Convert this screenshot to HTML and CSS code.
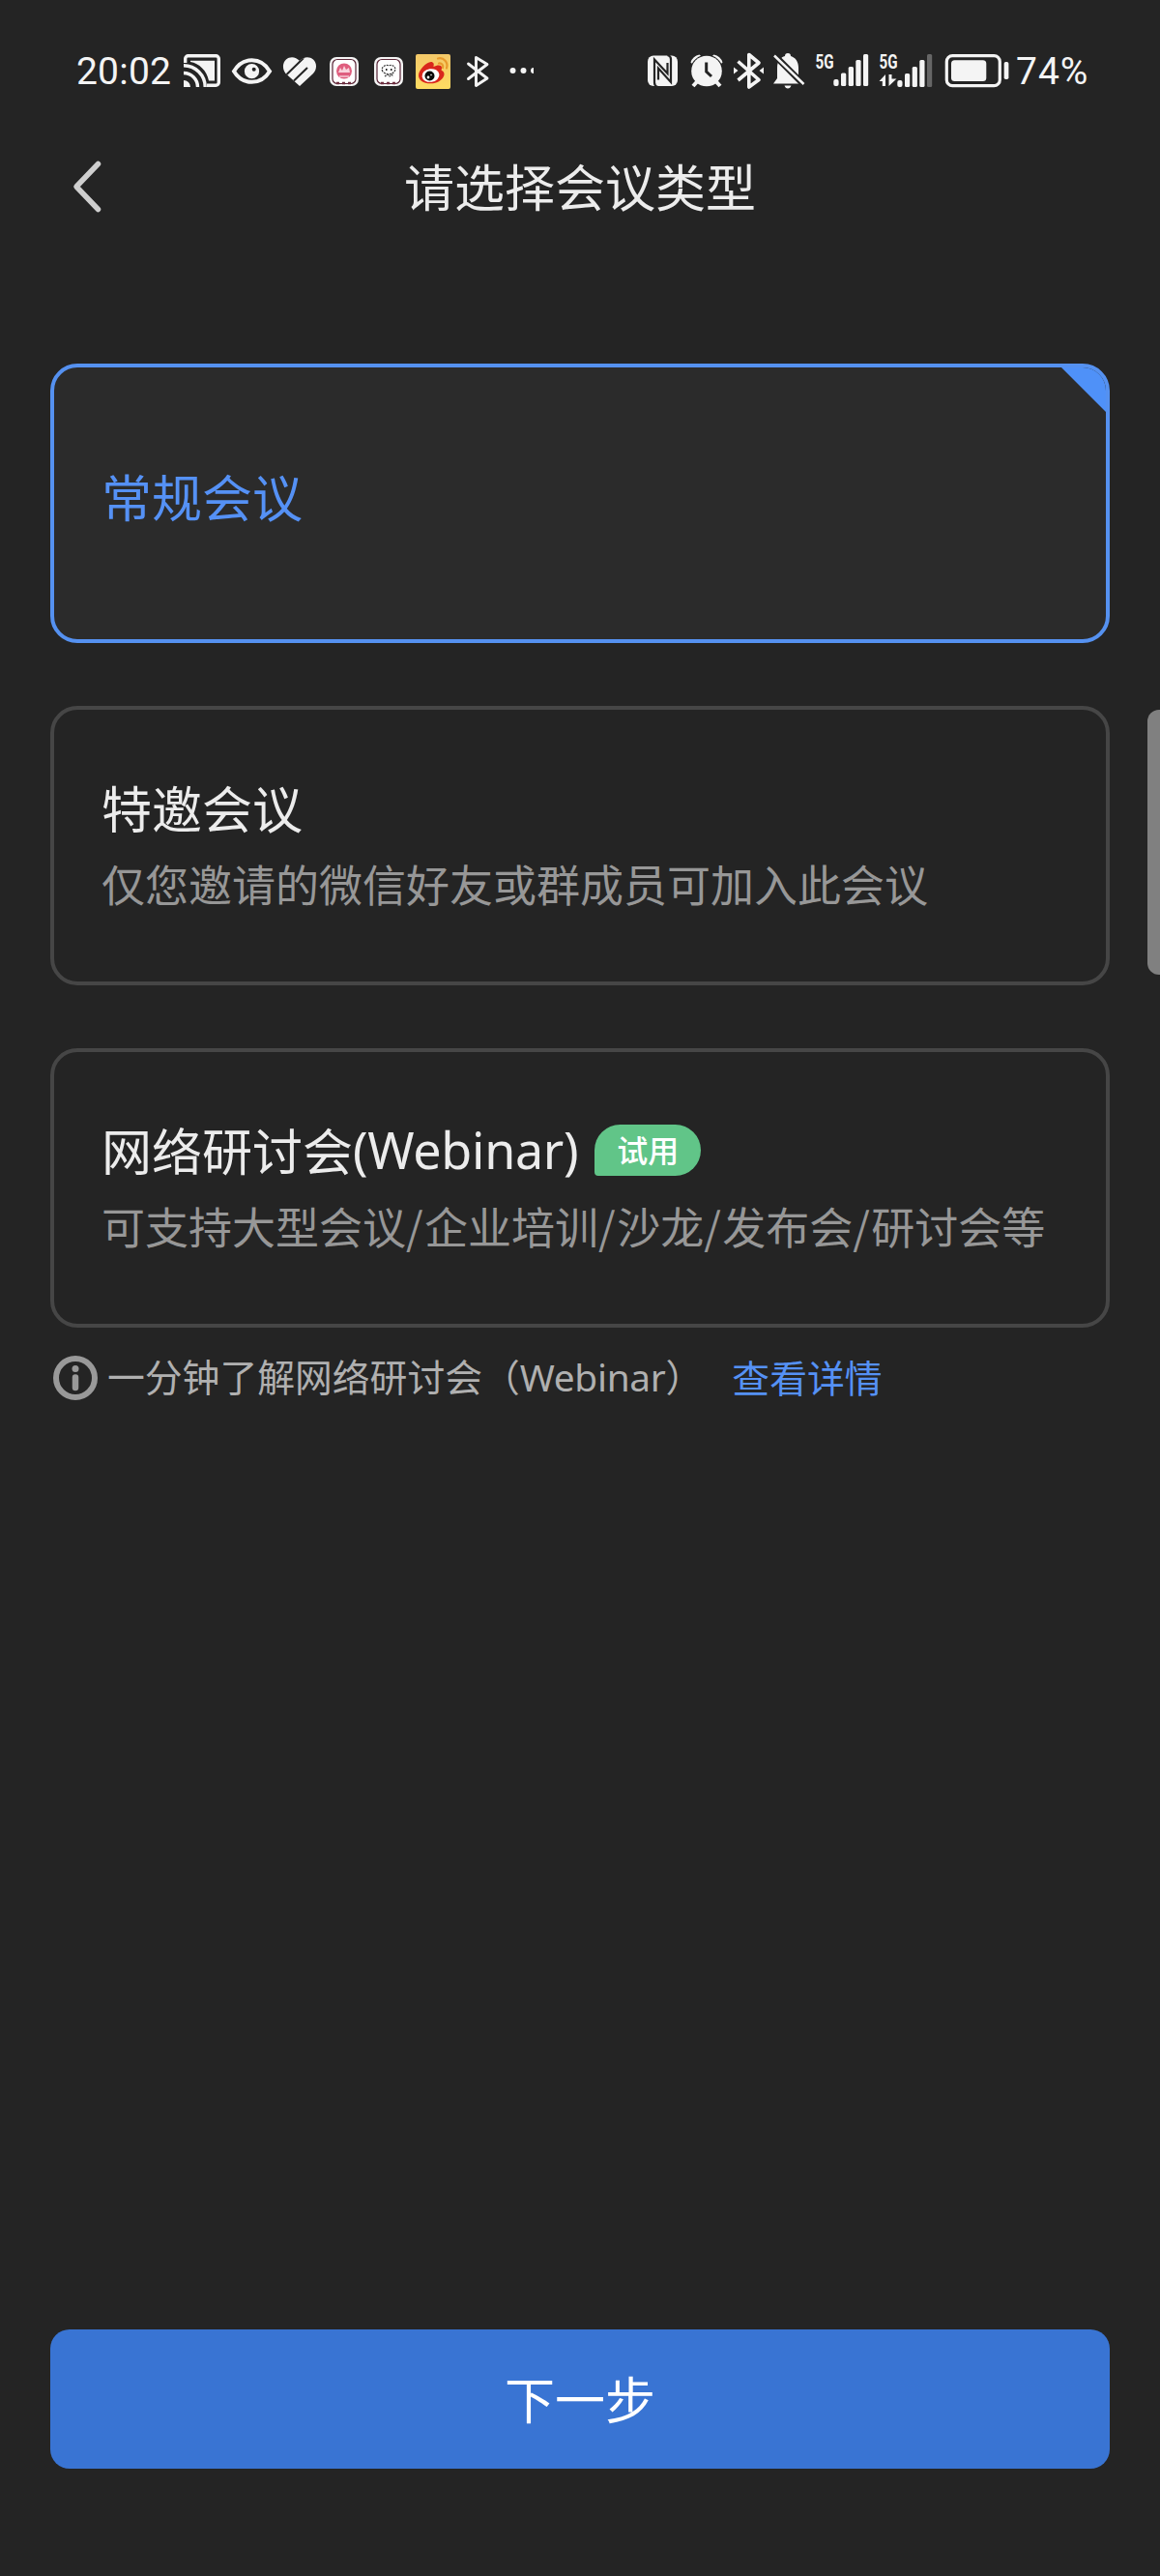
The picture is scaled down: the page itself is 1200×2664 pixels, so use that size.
FILE: index.html
```html
<!DOCTYPE html>
<html lang="zh-CN">
<head>
<meta charset="utf-8">
<title>请选择会议类型</title>
<link rel="stylesheet" href="styles.css">
</head>
<body>
<div class="screen">
  <header class="status">
    <span class="time">20:02</span>
    <svg class="tray" viewBox="184 48 372 50" width="372" height="50" fill="#f4f4f4">
      <defs>
        <linearGradient id="gold" x1="0" y1="0" x2="0" y2="1"><stop offset="0" stop-color="#f3c869"/><stop offset="1" stop-color="#ffdc62"/></linearGradient>
        <clipPath id="heart"><path d="M310 89 L295.500 76 C292 72 292 65 296 61.500 C300 58 306 58.500 310 63 C314 58.500 320 58 324 61.500 C328 65 328 72 324 76Z"/></clipPath>
      </defs>
      <g fill="none" stroke="#f4f4f4" stroke-width="3.400">
        <path d="M191.700 65V60.700a3 3 0 0 1 3-3h28.600a3 3 0 0 1 3 3v24.600a3 3 0 0 1-3 3H214"/>
        <path d="M190 67.800A22.200 22.200 0 0 1 212.200 90M190 75.500A14.500 14.500 0 0 1 204.500 90"/>
      </g>
      <path d="M190 83a7 7 0 0 1 7 7h-7zM197 62.700h25V83.500H216C214 73 206 65.500 197 64z"/>
      <path d="M242 73.700C251 58.500 270 58.500 279 73.700C270 88.500 251 88.500 242 73.700Z" fill="none" stroke="#f4f4f4" stroke-width="4"/>
      <circle cx="260.500" cy="73.700" r="7.600"/><circle cx="262.700" cy="71.700" r="2" fill="#242424"/>
      <g clip-path="url(#heart)"><path d="M290 56h40v36h-40z"/><path d="M294 79.500L314 60M303.500 84L318 70" fill="none" stroke="#242424" stroke-width="2"/></g>
      <g>
        <rect x="341" y="59" width="30" height="30" rx="7"/><rect x="344" y="61.500" width="24" height="25" rx="5" fill="#fff" stroke="#5a2637" stroke-width="1.200"/>
        <circle cx="356" cy="73.500" r="8" fill="#df5e7e"/><path d="M350 75l2-5 2 3 2-5 2 4 3-2 1 5z" fill="#f9d3dc"/><path d="M351 79h10" stroke="#fff" stroke-width="1"/>
        <path d="M348 86h17" stroke="#702f40" stroke-width="2.500" stroke-dasharray="3 3"/>
      </g>
      <g>
        <rect x="387" y="59" width="30" height="30" rx="7"/><rect x="390" y="61.500" width="24" height="25" rx="5" fill="#fff" stroke="#5a2637" stroke-width="1.200"/>
        <path d="M396 74c-3-4 3-8 6-6 4-2 9 2 6 6-2 3-9 4-12 0zM398 79l3-2 2 2 2-2 2 2" fill="none" stroke="#333" stroke-width="1.200" stroke-dasharray="2 1"/><path d="M399 71h1.500v2H399zM404 71h1.500v2H404z" fill="#222"/>
        <path d="M394 86h17" stroke="#702f40" stroke-width="2.500" stroke-dasharray="3 3"/>
      </g>
      <rect x="430" y="56" width="36" height="36" rx="2" fill="url(#gold)"/>
      <path d="M433 78C433 72 443 62 447.500 64.500C449.500 65.500 448.500 68 448.500 69C452 67 457 66.500 457 70C457 72 456 72.500 457 73C463 75.500 458 86 446 86.300C438 86.500 433 83 433 78Z" fill="#d9271c"/>
      <ellipse cx="445.500" cy="78" rx="9" ry="6.800" fill="#fff" transform="rotate(-8 445.500 78)"/><circle cx="444.500" cy="78.500" r="5" fill="#0b0b0b"/><circle cx="443" cy="80" r="1.400" fill="#fff"/><circle cx="446" cy="77.500" r=".8" fill="#fff"/>
      <path d="M453 60.500c6-1.500 11 4 9 10M454 65.500c3-.5 5 2 4 4.500" fill="none" stroke="#e89a2c" stroke-width="2.200" stroke-linecap="round"/>
      <path d="M484.500 66L504 81L492.500 88.500V59.500L504 66.500L484.500 81.500" fill="none" stroke="#f4f4f4" stroke-width="2.900" stroke-linejoin="round" stroke-linecap="round"/>
      <circle cx="530.500" cy="73" r="3"/><circle cx="541.500" cy="73" r="3"/><path d="M552 70a3 3 0 0 0 0 6z"/>
    </svg>
    <svg class="system" viewBox="664 48 386 50" width="386" height="50" fill="#f4f4f4">
      <rect x="670" y="57.500" width="31" height="31.500" rx="6"/>
      <path d="M680.500 90Q677 89 677 85.500V61.500L690.500 76V65M690.500 57Q694 58 694 61V85L681 70.500V82.500" fill="none" stroke="#242424" stroke-width="2.200"/>
      <circle cx="731" cy="73.500" r="15.800"/>
      <path d="M714.500 64.500a12 12 0 0 1 9-8l1.500 1.200q-6 2.300-9.200 8zM747.500 64.500a12 12 0 0 0-9-8l-1.500 1.200q6 2.300 9.200 8z"/>
      <path d="M721.500 84l-4.500 5M740.500 84l4.500 5" stroke="#f4f4f4" stroke-width="4"/>
      <path d="M730.700 64.500V74L736 79" fill="none" stroke="#242424" stroke-width="3"/>
      <path d="M763.500 63.500L785 82.500L774.800 90V56.500L785 65L763.500 83" fill="none" stroke="#f4f4f4" stroke-width="3.600" stroke-linejoin="round"/>
      <path d="M759 69.500l4.500 3.500-4.500 3.500zM790 69.500l-4.500 3.500 4.500 3.500z"/>
      <path d="M800 86.500L804 81V70C804 63 808 59 812 58Q812 55 815 55T818 58C823 59.500 826 64 826 70V81L829.500 86.500ZM811.500 88.500h7q-1 3-3.500 3t-3.500-3z"/>
      <path d="M800 56L833 89" stroke="#242424" stroke-width="6.500"/><path d="M801 57.500L831.500 87" stroke="#f4f4f4" stroke-width="2.500"/>
      <g class="net"><text x="843.500" y="71" textLength="19" lengthAdjust="spacingAndGlyphs">5G</text><text x="909.500" y="71" textLength="19" lengthAdjust="spacingAndGlyphs">5G</text></g>
      <g>
        <rect x="862.300" y="82" width="5.300" height="7" rx="2"/><rect x="870" y="75.500" width="5.300" height="13.500" rx="1.500"/><rect x="877.700" y="69" width="5.300" height="20" rx="1.500"/><rect x="885.300" y="62" width="5.300" height="27" rx="1.500"/><rect x="893" y="56" width="5.200" height="33" rx="1.500"/>
        <rect x="928.300" y="83" width="5.200" height="7" rx="2"/><rect x="936" y="76" width="5.200" height="14" rx="1.500"/><rect x="943.700" y="69" width="5.200" height="21" rx="1.500"/><rect x="951.300" y="62" width="5.200" height="28" rx="1.500"/><rect x="959" y="56" width="5.200" height="34" rx="1.500" fill="#666"/>
        <path d="M909.500 84l6.500-7V89h-3.200v-5zM919.500 77h3v4.500h5L919.500 89z"/>
      </g>
      <rect x="979.300" y="57.700" width="55" height="31" rx="6" fill="none" stroke="#f4f4f4" stroke-width="3.200"/>
      <rect x="984" y="62.300" width="36.300" height="21.700" rx="3.500"/><rect x="1038.700" y="64" width="4.700" height="18" rx="1.800"/>
    </svg>
    <span class="power">74%</span>
  </header>

  <nav class="titlebar">
    <svg class="back" viewBox="0 0 36 60" width="36" height="60"><path d="M29.500 6.500L7 30L29.500 53.500" fill="none" stroke="#cfcfcf" stroke-width="5.500" stroke-linecap="round" stroke-linejoin="round"/></svg>
    <h1 class="title">请选择会议类型</h1>
  </nav>

  <main class="types">
    <section class="card selected">
      <svg class="corner" viewBox="0 0 54 54" width="54" height="54"><path d="M0 0H54V54Z" fill="#4f91f8"/></svg>
      <h2 class="name">常规会议</h2>
    </section>
    <section class="card">
      <h2 class="name">特邀会议</h2>
      <p class="desc">仅您邀请的微信好友或群成员可加入此会议</p>
    </section>
    <section class="card">
      <h2 class="name">网络研讨会<span class="latin">(Webinar)</span><span class="badge">试用</span></h2>
      <p class="desc">可支持大型会议<i>/</i>企业培训<i>/</i>沙龙<i>/</i>发布会<i>/</i>研讨会等</p>
    </section>
    <div class="hint">
      <svg class="info" viewBox="0 0 46 46" width="46" height="46"><circle cx="23" cy="23" r="20" fill="none" stroke="#999" stroke-width="6"/><circle cx="23" cy="13.500" r="3.500" fill="#999"/><path d="M23 22.500V33" stroke="#999" stroke-width="6.500" stroke-linecap="round"/></svg>
      <span>一分钟了解网络研讨会（<span class="latin">Webinar</span>）</span>
      <a class="link">查看详情</a>
    </div>
  </main>
  <div class="scrollbar"></div>
  <footer class="footer"><button class="next">下一步</button></footer>
</div>
</body>
</html>
```
FILE: styles.css
```css
* { box-sizing: border-box; margin: 0; padding: 0; }
body { background: #242424; }
.screen {
  position: relative;
  display: flex;
  flex-direction: column;
  width: 1200px;
  height: 2664px;
  overflow: hidden;
  color: #ececec;
  font-family: "Noto Sans CJK SC", sans-serif;
}
.status {
  display: flex;
  height: 98px;
  padding: 48px 0 0 79px;
  color: #f4f4f4;
  font: 39px/52px Roboto, sans-serif;
  white-space: nowrap;
}
.time { width: 105px; letter-spacing: .2px; }
.tray { margin-right: 108px; flex: none; }
.system { flex: none; }
.power { padding-left: 1px; letter-spacing: 1px; }
.net { font: bold 20px Roboto, sans-serif; letter-spacing: 0; }

.titlebar {
  display: grid;
  grid-template-columns: 130px 1fr 130px;
  align-items: center;
  height: 190px;
}
.back { margin-left: 72px; }
.title { padding-bottom: 2px; font-size: 52px; line-height: 70px; font-weight: 400; text-align: center; }

.types {
  display: flex;
  flex-direction: column;
  gap: 65px;
  padding: 88px 52px 0;
}
.card {
  position: relative;
  height: 289px;
  padding: 62px 49px 0;
  border: 4px solid #464646;
  border-radius: 28px;
}
.selected {
  padding-top: 94px;
  background: #2b2b2b;
  border-color: #5591f0;
  color: #5591f5;
  overflow: hidden;
}
.corner { position: absolute; top: -4px; right: -4px; }
.name {
  display: flex;
  align-items: center;
  height: 78px;
  font-size: 52px;
  font-weight: 400;
  line-height: 78px;
}
.latin { font-family: "Noto Sans", sans-serif; letter-spacing: -.3px; }
.badge {
  width: 110px;
  height: 53px;
  margin-left: 17px;
  border-radius: 27px 27px 27px 4px;
  background: #61c588;
  color: #fff;
  font-size: 32px;
  font-weight: 500;
  line-height: 51px;
  text-align: center;
}
.desc { font-size: 45px; line-height: 80px; color: #979797; white-space: nowrap; }
.desc i { font-style: normal; letter-spacing: 1.4px; }
.hint {
  display: flex;
  align-items: center;
  height: 60px;
  margin: -43px 0 0 3px;
  color: #b0b0b0;
  font-size: 38.800px;
  line-height: 57px;
  white-space: nowrap;
}
.hint > span, .link { padding-bottom: 3px; }
.info { margin-right: 10px; }
.link { margin-left: 30px; color: #5591f5; }

.scrollbar {
  position: absolute;
  top: 734px;
  right: 0;
  width: 13px;
  height: 274px;
  border-radius: 12px 0 0 12px;
  background: #808080;
}
.footer { margin-top: auto; padding: 0 52px 111px; }
.next {
  display: block;
  width: 100%;
  height: 144px;
  border: 0;
  border-radius: 20px;
  background: #3974d3;
  color: #fff;
  font: 52px/140px "Noto Sans CJK SC", sans-serif;
  padding-bottom: 3px;
}
```
